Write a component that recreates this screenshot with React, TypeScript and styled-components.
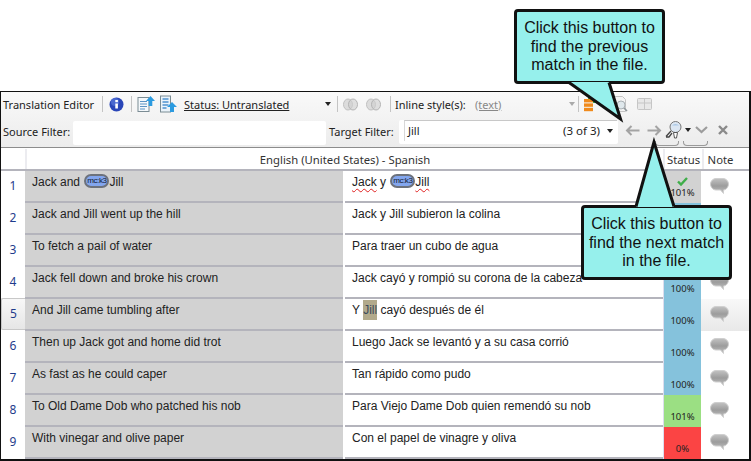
import type { ReactNode } from 'react';
import styled, { createGlobalStyle } from 'styled-components';

const GlobalStyle = createGlobalStyle`
  html, body { margin: 0; padding: 0; background: #fff; }
  body { font-family: "Liberation Sans", Arial, sans-serif; color: #222; }
`;

const Page = styled.div`
  position: relative;
  width: 751px;
  height: 461px;
  padding-top: 91px;
  box-sizing: border-box;
  overflow: hidden;
`;

const Editor = styled.div`
  width: 751px;
  height: 370px;
  box-sizing: border-box;
  border: solid #111;
  border-width: 1px 2px 2px 1px;
  font-family: "Noto Sans", sans-serif;
  background: #fff;
`;

const Toolbar = styled.div`
  height: 56px;
  box-sizing: border-box;
  border-bottom: 1px solid #8c8c8c;
  background: linear-gradient(#f9f9f9, #ececec);
  display: flex;
  flex-direction: column;
`;

const ToolRow = styled.div`
  height: 24px;
  display: flex;
  align-items: center;
  font-size: 11px;
  white-space: nowrap;
`;

const Spacer = styled.span<{ $w: number }>`
  flex: none;
  width: ${(p) => p.$w}px;
`;

const Title = styled.span`
  margin-left: 2px;
  width: 99px;
  color: #222;
`;

const Sep = styled.i<{ $l: number; $r: number }>`
  flex: none;
  width: 1px;
  height: 16px;
  background: #c4c4c4;
  margin: 0 ${(p) => p.$r}px 0 ${(p) => p.$l}px;
`;

const Status = styled.span`
  margin-left: 7px;
  width: 141px;
  text-decoration: underline;
  color: #222;
`;

const Caret = styled.span<{ $pale?: boolean }>`
  flex: none;
  width: 0;
  height: 0;
  border: 3px solid transparent;
  border-top: 4px solid ${(p) => (p.$pale ? '#aaa' : '#222')};
  border-bottom: 0;
`;

const InlineLabel = styled.span`
  width: 80px;
`;

const InlineValue = styled.span`
  width: 94px;
  color: #888;
  text-decoration: underline;
`;

const FilterRow = styled(ToolRow)`
  height: 31px;
  padding-left: 2px;
  position: relative;
`;

const SourceLabel = styled.span`
  width: 70px;
`;

const TargetLabel = styled.span`
  width: 67px;
`;

const SourceInput = styled.div`
  width: 253px;
  height: 24px;
  margin-right: 3px;
  align-self: flex-start;
  margin-top: 5px;
  background: #fff;
  border-radius: 2px;
`;

const TargetShell = styled.div`
  margin: 4px 0 0 3px;
  align-self: flex-start;
  width: 219px;
  height: 24px;
  background: #fff;
  border-radius: 2px;
  box-sizing: border-box;
  padding-left: 5px;
`;

const TargetInput = styled.div`
  width: 213px;
  height: 21px;
  box-sizing: border-box;
  border-top: 1px solid #c8c8c8;
  border-left: 1px solid #d8d8d8;
  display: flex;
  align-items: center;
  padding: 0 4px 1px 3px;
  background: #fff;
`;

const Query = styled.span`
  flex: 1;
`;

const Count = styled.span`
  margin-right: 7px;
  font-size: 11.5px;
`;

const FindActions = styled.div`
  display: flex;
  align-items: center;
  margin-left: 7px;
  margin-top: -3px;
`;

const GhostButton = styled.span<{ $left: number; $width: number }>`
  position: absolute;
  left: ${(p) => p.$left}px;
  top: 25px;
  height: 5px;
  width: ${(p) => p.$width}px;
  box-sizing: border-box;
  border: 1px solid #9a9a9a;
  border-top: 0;
  border-radius: 0 0 4px 4px;
`;

const HeaderRow = styled.div`
  display: grid;
  grid-template-columns: 24px 638px 39px 35px;
  height: 22px;
  margin-top: 1px;
  border-bottom: 2px solid #b4b4bc;
  box-sizing: border-box;
  font-size: 11.3px;
  line-height: 21px;
  text-align: center;
  color: #333;
`;

const HeaderCell = styled.div`
  border-left: 2px solid #ececf0;
  overflow: hidden;
  white-space: nowrap;
`;

const Row = styled.div`
  display: grid;
  grid-template-columns: 24px 318px 2px 318px 38px 1fr;
  height: 32px;
`;

const RowNumber = styled.div<{ $active?: boolean }>`
  font-size: 12px;
  color: #1f3c8c;
  text-align: center;
  line-height: 30px;
  height: 30px;
  box-sizing: border-box;
  ${(p) =>
    p.$active &&
    `
    margin-top: -1px;
    height: 32px;
    border: 1px solid #c8c8c8;
    border-right: 0;
    border-radius: 2px 0 0 2px;
    background: linear-gradient(#f8f8f8, #e6e6e6);
  `}
`;

const TextCell = styled.div<{ $source?: boolean }>`
  background: ${(p) => (p.$source ? '#d2d2d2' : '#fff')};
  border-bottom: 2px solid #b4b4bc;
  box-sizing: border-box;
  font-family: "Liberation Sans", Arial, sans-serif;
  font-size: 12px;
  line-height: 14px;
  padding: 4px 0 0 7px;
  color: #222;
  white-space: nowrap;
`;

const Gutter = styled.div`
  background: #fff;
`;

const StatusCell = styled.div<{ $tone: string }>`
  background: ${(p) => p.$tone};
  border-left: 1px solid #dde;
  box-sizing: border-box;
  font-size: 9.5px;
  line-height: 12px;
  text-align: center;
  color: #222;
  display: flex;
  flex-direction: column;
  justify-content: flex-end;
  align-items: center;
  padding-bottom: 4px;
`;

const CheckMark = styled.svg`
  margin-bottom: 1px;
`;

const NoteCell = styled.div<{ $active?: boolean }>`
  padding: 6px 0 0 9px;
  box-sizing: border-box;
  ${(p) => p.$active && 'background: linear-gradient(#f8f8f8, #e8e8e8);'}
`;

const Tag = styled.span`
  display: inline-block;
  width: 25px;
  height: 14px;
  margin: -2px 0 -2px 1px;
  line-height: 10px;
  box-sizing: border-box;
  border: 2px solid #6d727c;
  border-radius: 7px;
  background: #83a6ee;
  font-size: 8px;
  text-align: center;
  color: #101a33;
  letter-spacing: -0.4px;
  overflow: hidden;
`;

const Squiggle = styled.span`
  text-decoration: underline wavy #e02020 1px;
  text-underline-offset: 2px;
`;

const Match = styled.span`
  background: #b2aa8c;
  color: #3c4a5c;
  padding: 3px 0;
`;

const Callout = styled.div<{ $x: number; $y: number }>`
  position: absolute;
  left: ${(p) => p.$x}px;
  top: ${(p) => p.$y}px;
  width: 151px;
  height: 75px;
  box-sizing: border-box;
  border: 3px solid #111;
  border-radius: 4px;
  background: #96f0ec;
  font-family: "Liberation Sans", Arial, sans-serif;
  font-size: 16px;
  line-height: 18.5px;
  text-align: center;
  color: #111;
  padding-top: 7px;
`;

const Tail = styled.svg`
  position: absolute;
  left: -3px;
  top: -3px;
  overflow: visible;
`;

const ArrowSvg = styled.svg<{ $flip?: boolean }>`
  flex: none;
  ${(p) => p.$flip && 'transform: scaleX(-1);'}
`;

const InfoIcon = () => (
  <svg width="15" height="15" viewBox="0 0 15 15">
    <circle cx="7.5" cy="7.5" r="7" fill="#2a46b8" />
    <circle cx="6" cy="5" r="4" fill="#5f7fe0" opacity="0.6" />
    <rect x="6.3" y="6.5" width="2.6" height="5" fill="#fff" />
    <rect x="6.3" y="3" width="2.6" height="2.2" fill="#fff" />
  </svg>
);

const DocUpIcon = () => (
  <svg width="18" height="18" viewBox="0 0 18 18">
    <rect x="1" y="2.5" width="11" height="14" fill="#f4f8fb" stroke="#7b8c94" />
    <path d="M3 6.5h7M3 9h7M3 11.5h7M3 14h5" stroke="#5b93c4" />
    <path d="M13.5 1L18 6h-2.7v5h-3.6V6H9z" fill="#2c9be0" />
  </svg>
);

const RowsUpIcon = () => (
  <svg width="17" height="18" viewBox="0 0 17 18">
    <rect x="0.5" y="1" width="10" height="16" fill="#eaf3fa" stroke="#7b8c94" />
    <path d="M2.5 4h6M2.5 7h6M2.5 10h6M2.5 13h4" stroke="#4f93d0" strokeWidth="1.6" />
    <path d="M12 7l5 5h-3v5h-4v-5H7z" fill="#2c9be0" />
  </svg>
);

const RingsIcon = () => (
  <svg width="15" height="13" viewBox="0 0 15 13">
    <ellipse cx="5" cy="6.5" rx="4.5" ry="5.5" fill="#dcdcdc" stroke="#c0c0c0" />
    <ellipse cx="10" cy="6.5" rx="4.5" ry="5.5" fill="#cfcfcf" fillOpacity="0.6" stroke="#b4b4b4" />
  </svg>
);

const StackIcon = () => (
  <svg width="20" height="17" viewBox="0 0 20 17">
    <rect x="0" y="3" width="9" height="3.4" fill="#f08a1c" />
    <rect x="0" y="7.4" width="9" height="3.4" fill="#f08a1c" />
    <rect x="0" y="11.800" width="9" height="3.4" fill="#f08a1c" />
    <path d="M4 0h4v3H4zM9 3h9v4H9z" fill="#3fa84a" />
  </svg>
);

const GridIcon = () => (
  <svg width="15" height="12" viewBox="0 0 15 12">
    <rect x="0.5" y="0.5" width="14" height="11" rx="1" fill="#e8e8e8" stroke="#c6c6c6" />
    <path d="M0.500 5h14M7.500 0.500v11" stroke="#c6c6c6" />
  </svg>
);

const DocLensIcon = () => (
  <svg width="16" height="18" viewBox="0 0 16 18">
    <path d="M2.5 1.500h8l3 3v12h-11z" fill="#f4f4f4" stroke="#c4c4c4" />
    <circle cx="9" cy="10" r="4" fill="#dfe8ec" stroke="#a9b0b4" />
    <path d="M12 13l3 3" stroke="#8f979b" strokeWidth="1.6" />
  </svg>
);

const ArrowIcon = ({ flip }: { flip?: boolean }) => (
  <ArrowSvg $flip={flip} width="15" height="11" viewBox="0 0 15 11">
    <path d="M14.500 5.500H2.500M6.500 1L2 5.500L6.500 10" fill="none" stroke="#a3a3a3" strokeWidth="2" />
  </ArrowSvg>
);

const FindIcon = () => (
  <svg width="19" height="18" viewBox="0 0 19 18">
    <circle cx="10.500" cy="6" r="5.500" fill="#dbe6f2" stroke="#777" />
    <path d="M7 4.500a4 3 0 0 1 7 0z" fill="#a9c7e6" />
    <path d="M6 10L1 15.500M1 16h3l3-4" fill="none" stroke="#444" strokeWidth="1.3" />
    <path d="M8.500 11.500h4l-1 5.500h-2z" fill="#fff" stroke="#555" />
  </svg>
);

const ChevronIcon = () => (
  <svg width="13" height="8" viewBox="0 0 13 8">
    <path d="M1 1l5.500 5L12 1" fill="none" stroke="#9c9c9c" strokeWidth="2.2" />
  </svg>
);

const CloseIcon = () => (
  <svg width="10" height="10" viewBox="0 0 10 10">
    <path d="M1 1l8 8M9 1l-8 8" fill="none" stroke="#8a8a8a" strokeWidth="2.4" />
  </svg>
);

const BubbleIcon = ({ id }: { id: number }) => (
  <svg width="19" height="19" viewBox="0 0 19 19">
    <defs>
      <linearGradient id={`bubble${id}`} x1="0" y1="0" x2="0" y2="1">
        <stop offset="0" stopColor="#c2c2c2" />
        <stop offset="0.5" stopColor="#9c9c9c" />
        <stop offset="1" stopColor="#c2c2c2" />
      </linearGradient>
    </defs>
    <path
      d="M6 1.500h7c3 0 5.500 2.500 5.500 5.500s-2.500 6-5 6v3.500l-3-3.500H6C3 13 .5 10 .5 7S3 1.500 6 1.500z"
      fill={`url(#bubble${id})`}
      stroke="#d0d0d0"
    />
  </svg>
);

const mcTag = <Tag>mc:k3</Tag>;

type RowData = {
  source: ReactNode;
  target: ReactNode;
  tone: string;
  pct: string;
  check?: boolean;
};

const BLUE = '#85c2dc';

const rows: RowData[] = [
  {
    source: <>Jack and {mcTag}Jill</>,
    target: <><Squiggle>Jack</Squiggle> y {mcTag}<Squiggle>Jill</Squiggle></>,
    tone: '#d2d2d2',
    pct: '101%',
    check: true,
  },
  { source: 'Jack and Jill went up the hill', target: 'Jack y Jill subieron la colina', tone: BLUE, pct: '100%' },
  { source: 'To fetch a pail of water', target: 'Para traer un cubo de agua', tone: BLUE, pct: '100%' },
  { source: 'Jack fell down and broke his crown', target: 'Jack cayó y rompió su corona de la cabeza', tone: BLUE, pct: '100%' },
  { source: 'And Jill came tumbling after', target: <>Y <Match>Jill</Match> cayó después de él</>, tone: BLUE, pct: '100%' },
  { source: 'Then up Jack got and home did trot', target: 'Luego Jack se levantó y a su casa corrió', tone: BLUE, pct: '100%' },
  { source: 'As fast as he could caper', target: 'Tan rápido como pudo', tone: BLUE, pct: '100%' },
  { source: 'To Old Dame Dob who patched his nob', target: 'Para Viejo Dame Dob quien remendó su nob', tone: '#9bdf83', pct: '101%' },
  { source: 'With vinegar and olive paper', target: 'Con el papel de vinagre y oliva', tone: '#fb4444', pct: '0%' },
];

export default function App() {
  return (
    <>
      <GlobalStyle />
      <Page>
        <Editor>
          <Toolbar>
            <ToolRow>
              <Title>Translation Editor</Title>
              <Sep $l={0} $r={6} />
              <InfoIcon />
              <Sep $l={7} $r={5} />
              <DocUpIcon />
              <Spacer $w={5} />
              <RowsUpIcon />
              <Status>Status: Untranslated</Status>
              <Caret />
              <Sep $l={6} $r={5} />
              <RingsIcon />
              <Spacer $w={8} />
              <RingsIcon />
              <Sep $l={9} $r={4} />
              <InlineLabel>Inline style(s):</InlineLabel>
              <InlineValue>(text)</InlineValue>
              <Caret $pale />
              <Sep $l={3} $r={5} />
              <StackIcon />
              <Spacer $w={8} />
              <DocLensIcon />
              <Spacer $w={9} />
              <GridIcon />
            </ToolRow>
            <FilterRow>
              <SourceLabel>Source Filter:</SourceLabel>
              <SourceInput />
              <TargetLabel>Target Filter:</TargetLabel>
              <TargetShell>
                <TargetInput>
                  <Query>Jill</Query>
                  <Count>(3 of 3)</Count>
                  <Caret />
                </TargetInput>
              </TargetShell>
              <FindActions>
                <ArrowIcon />
                <Spacer $w={7} />
                <ArrowIcon flip />
                <Spacer $w={3} />
                <FindIcon />
                <Spacer $w={1} />
                <Caret />
                <Spacer $w={4} />
                <ChevronIcon />
                <Spacer $w={10} />
                <CloseIcon />
              </FindActions>
              <GhostButton $left={654} $width={24} />
              <GhostButton $left={682} $width={25} />
            </FilterRow>
          </Toolbar>
          <HeaderRow>
            <div />
            <HeaderCell>English (United States) - Spanish</HeaderCell>
            <HeaderCell>Status</HeaderCell>
            <HeaderCell>Note</HeaderCell>
          </HeaderRow>
          {rows.map((r, i) => (
            <Row key={i}>
              <RowNumber $active={i === 4}>{i + 1}</RowNumber>
              <TextCell $source>{r.source}</TextCell>
              <Gutter />
              <TextCell>{r.target}</TextCell>
              <StatusCell $tone={r.tone}>
                {r.check && (
                  <CheckMark width="11" height="9" viewBox="0 0 11 9">
                    <path d="M1 4.500L4 7.500L10 1" fill="none" stroke="#3fae4a" strokeWidth="2.4" />
                  </CheckMark>
                )}
                {r.pct}
              </StatusCell>
              <NoteCell $active={i === 4}>
                <BubbleIcon id={i} />
              </NoteCell>
            </Row>
          ))}
        </Editor>

        <Callout $x={514} $y={9}>
          Click this button to
          <br />
          find the previous
          <br />
          match in the file.
          <Tail width="151" height="75">
            <path d="M55 73L106.500 110L95 73z" fill="#96f0ec" />
            <path d="M55 73.500L106.500 110L95 73.500" fill="none" stroke="#111" strokeWidth="3" />
          </Tail>
        </Callout>
        <Callout $x={581} $y={205}>
          <Tail width="151" height="75">
            <path d="M55 2L73 -63L93 2z" fill="#96f0ec" />
            <path d="M55 1.500L73 -63L93 1.500" fill="none" stroke="#111" strokeWidth="3" />
          </Tail>
          Click this button to
          <br />
          find the next match
          <br />
          in the file.
        </Callout>
      </Page>
    </>
  );
}
